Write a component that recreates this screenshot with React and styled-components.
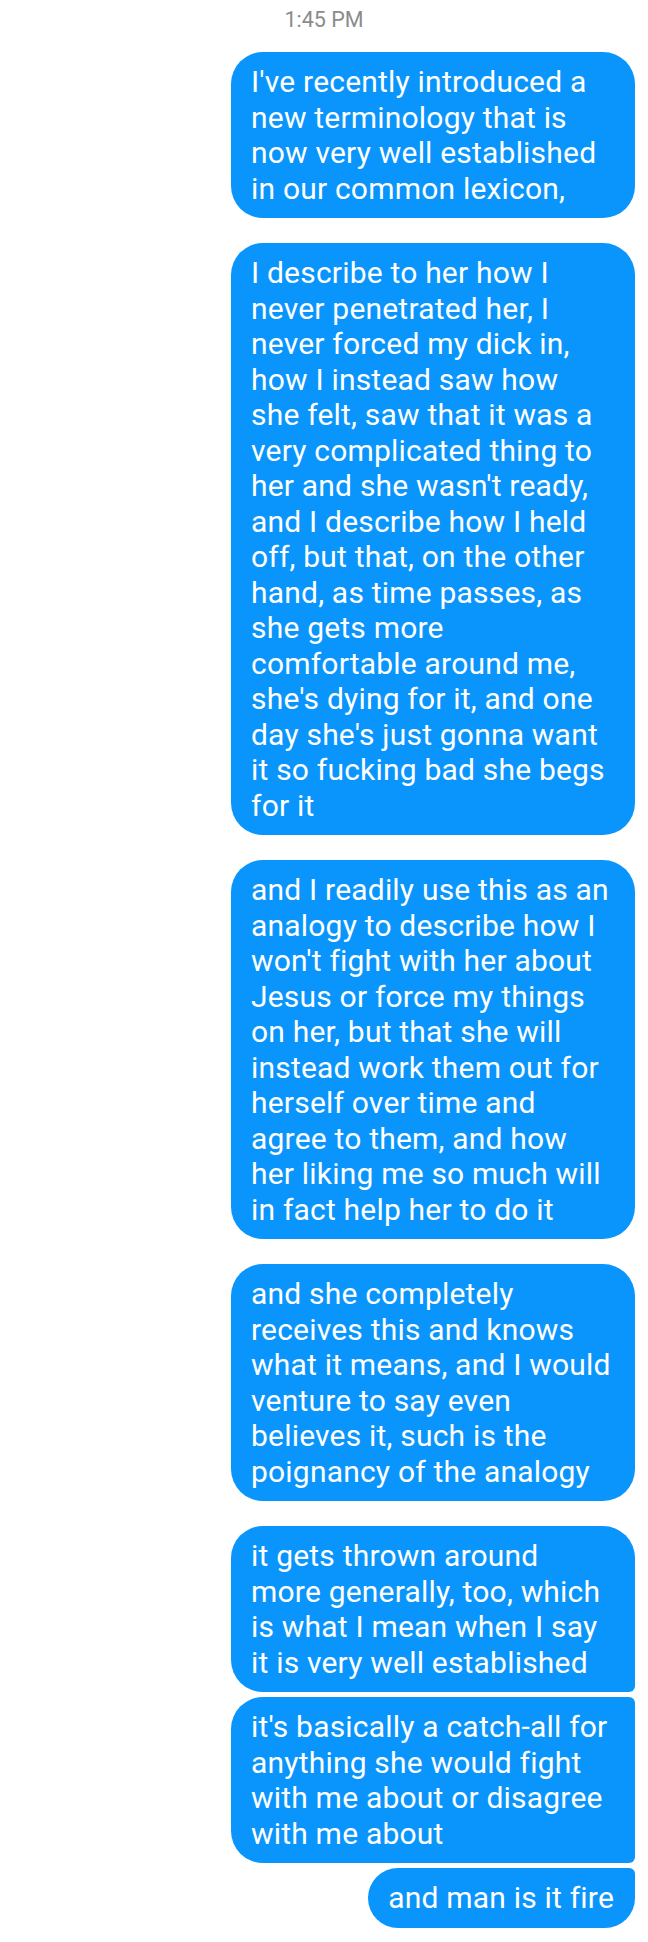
import React from 'react';
import styled, { createGlobalStyle } from 'styled-components';

const GlobalStyle = createGlobalStyle`
  html, body {
    margin: 0;
    padding: 0;
    background: #ffffff;
  }
  body {
    font-family: Roboto, "Noto Sans", "Liberation Sans", sans-serif;
  }
`;

const Thread = styled.div`
  display: flex;
  flex-direction: column;
  align-items: flex-end;
  padding: 0 13px 13px 0;
`;

const Timestamp = styled.div`
  align-self: stretch;
  text-align: center;
  color: #8b8b8b;
  font-size: 21.5px;
  line-height: 25px;
  padding: 7px 0 0 13px;
  margin-bottom: 20px;
`;

const Group = styled.div`
  display: flex;
  flex-direction: column;
  align-items: flex-end;
  gap: 5px;
  margin-bottom: 25px;

  &:last-child {
    margin-bottom: 0;
  }
`;

const Bubble = styled.div`
  box-sizing: border-box;
  width: ${(p) => (p.$wide ? '404px' : 'auto')};
  padding: 12px 21px 12px 20px;
  background: #0a95fd;
  color: #ffffff;
  border-radius: 32px;
  border-top-right-radius: ${(p) => (p.$first ? '32px' : '6px')};
  border-bottom-right-radius: ${(p) => (p.$last ? '32px' : '6px')};
`;

const BubbleText = styled.div`
  max-width: 361px;
  font-size: 30px;
  letter-spacing: 0.2px;
  line-height: 35.5px;
`;

const groups = [
  [{ wide: true, text: "I've recently introduced a new terminology that is now very well established in our common lexicon," }],
  [
    {
      wide: true,
      text: "I describe to her how I never penetrated her, I never forced my dick in, how I instead saw how she felt, saw that it was a very complicated thing to her and she wasn't ready, and I describe how I held off, but that, on the other hand, as time passes, as she gets more comfortable around me, she's dying for it, and one day she's just gonna want it so fucking bad she begs for it",
    },
  ],
  [
    {
      wide: true,
      text: "and I readily use this as an analogy to describe how I won't fight with her about Jesus or force my things on her, but that she will instead work them out for herself over time and agree to them, and how her liking me so much will in fact help her to do it",
    },
  ],
  [
    {
      wide: true,
      text: 'and she completely receives this and knows what it means, and I would venture to say even believes it, such is the poignancy of the analogy',
    },
  ],
  [
    { wide: true, text: 'it gets thrown around more generally, too, which is what I mean when I say it is very well established' },
    { wide: true, text: "it's basically a catch-all for anything she would fight with me about or disagree with me about" },
    { wide: false, text: 'and man is it fire' },
  ],
];

export default function App() {
  return (
    <>
      <GlobalStyle />
      <Thread>
        <Timestamp>1:45 PM</Timestamp>
        {groups.map((msgs, gi) => (
          <Group key={gi}>
            {msgs.map((m, i) => (
              <Bubble key={i} $wide={m.wide} $first={i === 0} $last={i === msgs.length - 1}>
                <BubbleText>{m.text}</BubbleText>
              </Bubble>
            ))}
          </Group>
        ))}
      </Thread>
    </>
  );
}
